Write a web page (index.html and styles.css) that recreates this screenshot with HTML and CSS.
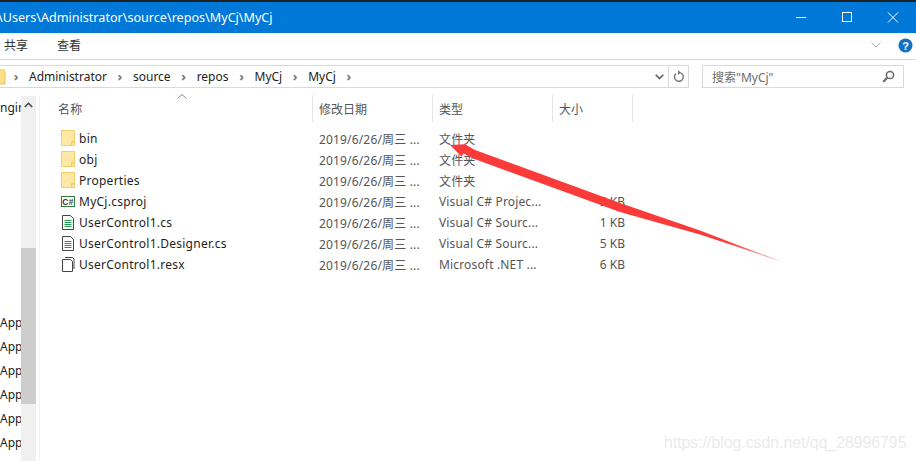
FILE: index.html
```html
<!DOCTYPE html>
<html lang="zh">
<head>
<meta charset="utf-8">
<title>MyCj</title>
<link rel="stylesheet" href="styles.css">
</head>
<body>
<div class="window">
  <div class="topstrip"></div>
  <header class="titlebar">
    <span class="title">\Users\Administrator\source\repos\MyCj\MyCj</span>
    <div class="winbtns">
      <svg class="wbtn" width="46" height="31" viewBox="0 0 46 31"><path d="M18 15.500h10" stroke="#fff" fill="none"/></svg>
      <svg class="wbtn" width="46" height="31" viewBox="0 0 46 31"><rect x="18.500" y="10.500" width="9" height="9" stroke="#fff" fill="none"/></svg>
      <svg class="wbtn" width="46" height="31" viewBox="0 0 46 31"><path d="M18 10.500l10 10M28 10.500l-10 10" stroke="#fff" fill="none"/></svg>
    </div>
  </header>
  <nav class="ribbon">
    <span class="tab tab-share">共享</span>
    <span class="tab tab-view">查看</span>
    <svg class="rib-chev" width="10" height="6" viewBox="0 0 10 6"><path d="M.5.5L5 5 9.500.5" stroke="#a8a8a8" fill="none"/></svg>
    <svg class="help" width="15" height="15" viewBox="0 0 15 15"><circle cx="7.500" cy="7.500" r="7" fill="#1170c4"/><text x="7.500" y="11.500" class="help-q">?</text></svg>
  </nav>
  <div class="addressrow">
    <div class="address">
      <svg class="addr-folder" width="6" height="16" viewBox="0 0 6 16"><path d="M-3 1h7l1 2v12h-8z" fill="#ffe08a" stroke="#e9c34f"/></svg>
      <div class="crumbs">
        <span class="sep">›</span><span>Administrator</span>
        <span class="sep">›</span><span>source</span>
        <span class="sep">›</span><span>repos</span>
        <span class="sep">›</span><span>MyCj</span>
        <span class="sep">›</span><span>MyCj</span>
        <span class="sep">›</span>
      </div>
      <svg class="addr-chev" width="9" height="6" viewBox="0 0 9 6"><path d="M.7.7l3.800 3.800L8.300.7" stroke="#555" stroke-width="1.500" fill="none"/></svg>
      <div class="refresh">
        <svg width="12" height="13" viewBox="0 0 12 13"><path d="M7.500 2.800A4.400 4.400 0 1 1 3 3.600" stroke="#777" stroke-width="1.400" fill="none"/><path d="M5 .3v4.600l3-2.300z" fill="#777"/></svg>
      </div>
    </div>
    <div class="search">
      <span>搜索"MyCj"</span>
      <svg width="13" height="13" viewBox="0 0 13 13"><circle cx="8" cy="5" r="3.600" stroke="#666" stroke-width="1.500" fill="none"/><path d="M5.200 7.800L1.300 11.700" stroke="#666" stroke-width="2.200"/></svg>
    </div>
  </div>
  <main class="body">
    <aside class="tree">
      <div class="tree-items">
        <div class="tree-top">ngin</div>
        <ul class="tree-apps">
          <li>App</li><li>App</li><li>App</li><li>App</li><li>App</li><li>App</li>
        </ul>
      </div>
      <div class="scroll">
        <svg class="scroll-up" width="9" height="6" viewBox="0 0 9 6"><path d="M.8 5l3.700-3.700L8.200 5" stroke="#444" stroke-width="1.600" fill="none"/></svg>
        <div class="thumb"></div>
      </div>
    </aside>
    <section class="files">
      <div class="sorter"><svg width="10" height="5" viewBox="0 0 10 5"><path d="M.5 4.500L5 .5l4.500 4" stroke="#888" fill="none"/></svg></div>
      <div class="row head">
        <div class="c-name">名称</div>
        <div class="c-date">修改日期</div>
        <div class="c-type">类型</div>
        <div class="c-size">大小</div>
      </div>
      <div class="rows">
        <div class="row">
          <div class="c-name"><svg class="ic" width="16" height="17" viewBox="0 0 16 17"><use href="#folder"/></svg>bin</div>
          <div class="c-date">2019/6/26/周三 ...</div><div class="c-type">文件夹</div><div class="c-size"></div>
        </div>
        <div class="row">
          <div class="c-name"><svg class="ic" width="16" height="17" viewBox="0 0 16 17"><use href="#folder"/></svg>obj</div>
          <div class="c-date">2019/6/26/周三 ...</div><div class="c-type">文件夹</div><div class="c-size"></div>
        </div>
        <div class="row">
          <div class="c-name"><svg class="ic" width="16" height="17" viewBox="0 0 16 17"><use href="#folder"/></svg>Properties</div>
          <div class="c-date">2019/6/26/周三 ...</div><div class="c-type">文件夹</div><div class="c-size"></div>
        </div>
        <div class="row">
          <div class="c-name"><svg class="ic" width="16" height="17" viewBox="0 0 16 17"><rect x="1.500" y="3.500" width="13" height="10" fill="#fff" stroke="#2f7d3a"/><text x="8" y="11.500" class="cs">C#</text></svg>MyCj.csproj</div>
          <div class="c-date">2019/6/26/周三 ...</div><div class="c-type">Visual C# Projec...</div><div class="c-size">5 KB</div>
        </div>
        <div class="row">
          <div class="c-name"><svg class="ic" width="16" height="17" viewBox="0 0 16 17"><use href="#csfile"/></svg>UserControl1.cs</div>
          <div class="c-date">2019/6/26/周三 ...</div><div class="c-type">Visual C# Sourc...</div><div class="c-size">1 KB</div>
        </div>
        <div class="row">
          <div class="c-name"><svg class="ic" width="16" height="17" viewBox="0 0 16 17"><use href="#csfile"/></svg>UserControl1.Designer.cs</div>
          <div class="c-date">2019/6/26/周三 ...</div><div class="c-type">Visual C# Sourc...</div><div class="c-size">5 KB</div>
        </div>
        <div class="row">
          <div class="c-name"><svg class="ic" width="16" height="17" viewBox="0 0 16 17"><path d="M2.500 3.500h8l2 2v10h-10z" fill="#fff" stroke="#444"/><path d="M5 1.500h7.500l1.500 1.500v10" fill="none" stroke="#444"/></svg>UserControl1.resx</div>
          <div class="c-date">2019/6/26/周三 ...</div><div class="c-type">Microsoft .NET ...</div><div class="c-size">6 KB</div>
        </div>
      </div>
    </section>
  </main>
</div>

<svg class="defs" width="0" height="0">
  <defs>
    <g id="folder">
      <path d="M1.500 .5h13v15h-13z" fill="#ffe8a6" stroke="#efcf6a"/>
      <path d="M11.500 15.500v-4h3" fill="#ffdc7a" stroke="#efcf6a"/>
    </g>
    <g id="csfile">
      <path d="M2.500 1.500h8l3 3v11h-11z" fill="#fff" stroke="#444"/>
      <path d="M4.500 6.500h7M4.500 8.500h7M4.500 10.500h7M4.500 12.500h7" stroke="#1f9a4a"/>
    </g>
  </defs>
</svg>

<svg class="arrow" width="916" height="461" viewBox="0 0 916 461">
  <defs>
    <linearGradient id="tail" gradientUnits="userSpaceOnUse" x1="720" y1="240" x2="785" y2="263">
      <stop offset="0" stop-color="#fb3a3a"/><stop offset="1" stop-color="#fb3a3a" stop-opacity=".4"/>
    </linearGradient>
  </defs>
  <path d="M450 145L465 144.300L475 150L620 203L700 230.500L784 262.500L700 234.500L620 212L473 158.500L463.500 153.500L461.700 156.700Z" fill="url(#tail)"/>
</svg>
<div class="watermark">https://blog.csdn.net/qq_28996795</div>
</body>
</html>
```
FILE: styles.css
```css
* { box-sizing: border-box; }
html, body { margin: 0; padding: 0; }
body {
  width: 916px; height: 461px; overflow: hidden; background: #fff; position: relative;
  font-family: "Noto Sans", "Noto Sans CJK SC", sans-serif; font-size: 12px; color: #1e1e1e;
}
.window { display: flex; flex-direction: column; height: 461px; }
.topstrip { height: 2px; background: #1f2123; flex: none; }
.titlebar {
  height: 31px; flex: none; background: #0078d7; color: #fff;
  display: flex; align-items: center; justify-content: space-between; overflow: hidden;
}
.title { font-size: 12.6px; margin-left: -2px; white-space: nowrap; }
.winbtns { display: flex; }
.wbtn { display: block; }
.ribbon {
  height: 27px; flex: none; border-bottom: 1px solid #d9d9d9;
  display: flex; align-items: center; padding-bottom: 2px; color: #333;
}
.tab-share { margin-left: 4px; }
.tab-view { margin-left: 29px; }
.rib-chev { margin-left: auto; margin-right: 17px; }
.help { margin-right: 3px; }
.help-q { font: bold 11px "Liberation Sans", sans-serif; fill: #fff; text-anchor: middle; }
.addressrow { display: flex; flex: none; height: 23px; margin-top: 5px; }
.address {
  width: 690px; margin-left: -1px; border: 2px solid #d9d9d9; border-width: 1px 1px 1px 0;
  display: flex; align-items: center; height: 23px;
}
.addr-folder { flex: none; margin-left: 1px; }
.crumbs { display: flex; align-items: center; color: #222; font-size: 12px; margin-left: -3px; }
.crumbs span { white-space: nowrap; }
.sep { color: #777; width: 26px; text-align: center; font-size: 13px; font-weight: 700; line-height: 1; }
.addr-chev { margin-left: auto; margin-right: 4px; }
.refresh {
  width: 20px; height: 21px; border-left: 1px solid #d9d9d9;
  display: flex; align-items: center; justify-content: center;
}
.search {
  width: 202px; height: 23px; margin-left: 13px; border: 1px solid #d9d9d9;
  display: flex; align-items: center; justify-content: space-between;
  padding: 0 8px 0 9px; color: #6d6d6d;
}
.body { flex: 1; display: flex; min-height: 0; margin-top: 7px; }
.tree { width: 40px; flex: none; display: flex; border-right: 1px solid #f0f0f0; margin-top: 1px; }
.tree-items { width: 21px; flex: none; display: flex; flex-direction: column; overflow: hidden; }
.tree-top { text-align: right; line-height: 18px; margin-top: 3px; white-space: nowrap; }
.tree-apps { list-style: none; margin: 194px 0 0; padding: 0; }
.tree-apps li { height: 24px; line-height: 24px; text-align: right; }
.scroll { width: 15px; flex: none; background: #f0f0f0; position: relative; display: flex; flex-direction: column; align-items: center; }
.scroll-up { margin-top: 6px; flex: none; }
.thumb { align-self: stretch; height: 156px; margin-top: 140px; background: #cdcdcd; }
.files { flex: 1; min-width: 0; position: relative; }
.sorter { position: absolute; left: 137px; top: -1px; line-height: 0; }
.row { display: grid; grid-template-columns: 273px 120px 120px 80px; height: 21px; align-items: center; white-space: nowrap; color: #555; letter-spacing: .16px; }
.row .c-name { color: #1e1e1e; display: flex; align-items: center; padding-left: 18px; letter-spacing: .25px; }
.row .c-date, .row .c-type { padding-left: 6px; }
.row .c-size { text-align: right; padding-right: 8px; letter-spacing: 0; }
.head { height: 27px; color: #555; margin-bottom: 6px; letter-spacing: 0; }
.head > div { height: 27px; display: flex; align-items: center; border-right: 1px solid #e5e5e5; }
.head .c-name { color: #555; }
.head .c-size { justify-content: flex-start; padding-left: 6px; }
.ic { flex: none; margin-left: 2px; margin-right: 3px; }
.cs { font: bold 8.500px "Liberation Sans", sans-serif; fill: #333; text-anchor: middle; }
.defs { position: absolute; }
.arrow { position: absolute; left: 0; top: 0; pointer-events: none; }
.watermark {
  position: absolute; left: 664px; top: 432px; font: 15.800px/22px "Liberation Sans", sans-serif; color: #ebebeb; white-space: nowrap;
}
```
